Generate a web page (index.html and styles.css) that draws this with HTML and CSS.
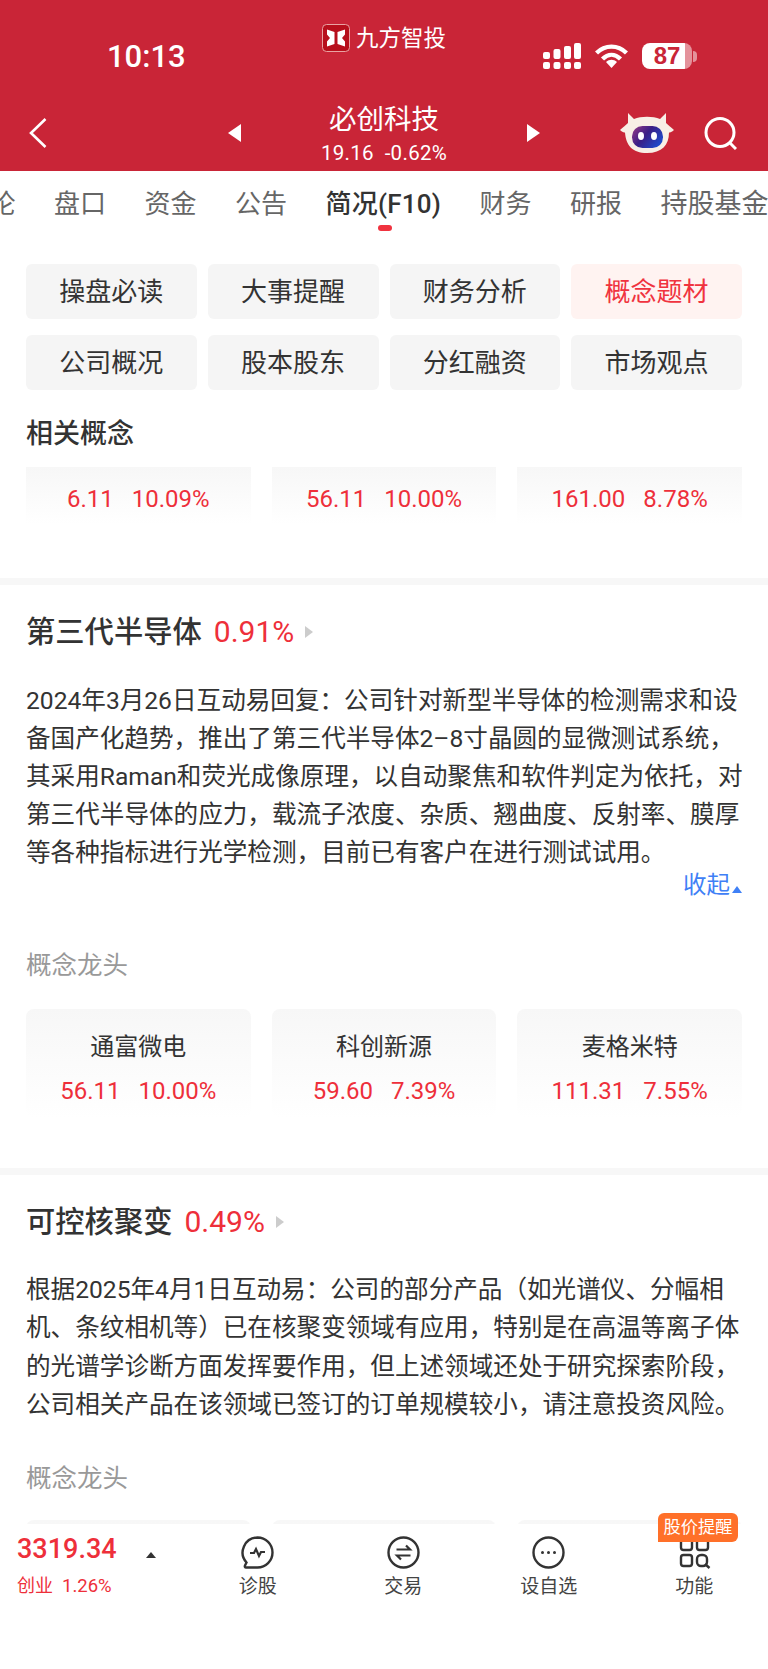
FILE: index.html
```html
<!DOCTYPE html>
<html lang="zh-CN">
  <head>
    <meta charset="UTF-8" />
    <meta name="viewport" content="width=device-width, initial-scale=1.0" />
    <title>必创科技 简况</title>
    <link rel="stylesheet" href="styles.css">
  </head>
  <body>
    <div class="page">
      <!-- Red header -->
      <header class="header">
        <div class="status">
          <div class="time">10:13</div>
          <div class="brand">
            <svg class="brand-logo" viewBox="0 0 28 28" width="28" height="28">
              <rect x="0.5" y="0.5" width="27" height="27" rx="4" fill="#b70f1c" stroke="#e9a3a3"/>
              <path d="M5 5.500 L12.500 8 V20 L5 22.500 V17.500 L8 14 L5 10.500 Z" fill="#fff"/>
              <path d="M23 5.500 L15.500 8 V20 L23 22.500 V17.500 L20 14 L23 10.500 Z" fill="#fff"/>
            </svg>
            <span class="brand-name">九方智投</span>
          </div>
          <div class="status-icons">
            <svg viewBox="0 0 38 26" width="38" height="26" fill="#fff">
              <rect x="0" y="19" width="7" height="7" rx="2"/>
              <rect x="10.500" y="19" width="7" height="7" rx="2"/>
              <rect x="21" y="19" width="7" height="7" rx="2"/>
              <rect x="31" y="19" width="7" height="7" rx="2"/>
              <rect x="0" y="9" width="7" height="7" rx="2"/>
              <rect x="10.500" y="6" width="7" height="10" rx="2"/>
              <rect x="21" y="3" width="7" height="13" rx="2"/>
              <rect x="31" y="0" width="7" height="16" rx="2"/>
            </svg>
            <svg viewBox="0 0 33 24" width="33" height="24" fill="none" stroke="#fff" stroke-width="4.400">
              <path d="M1.500 9 C10 0.500 23 0.500 31.500 9"/>
              <path d="M7.500 15 C13 9.500 20 9.500 25.500 15"/>
              <path d="M11 18 L16.500 24 L22 18 C18.500 15 14.500 15 11 18 Z" fill="#fff" stroke="none"/>
            </svg>
            <div class="battery">
              <div class="battery-body">87</div>
              <div class="battery-nub"></div>
            </div>
          </div>
        </div>
        <div class="nav">
          <svg class="nav-back" viewBox="0 0 18 30" width="18" height="30" fill="none" stroke="#fff" stroke-width="2.600">
            <path d="M16.500 1 L2 15 L16.500 29"/>
          </svg>
          <div class="pager">
            <span class="tri-left"></span>
            <div class="stock">
              <div class="stock-name">必创科技</div>
              <div class="stock-price">19.16&nbsp; -0.62%</div>
            </div>
            <span class="tri-right"></span>
          </div>
          <svg class="nav-bot" viewBox="0 0 54 40" width="54" height="40">
            <defs>
              <linearGradient id="botFace" x1="0" y1="0" x2="1" y2="0.600">
                <stop offset="0" stop-color="#9a3a86"/>
                <stop offset="0.500" stop-color="#3a1f86"/>
                <stop offset="1" stop-color="#1f48c8"/>
              </linearGradient>
            </defs>
            <path d="M8 0 L14 6 C21 3 33 3 40 6 L46 0 L46 10 C48 12 51 14 54 17 C52 19 50 19.500 49 19.500 C49 32 42 40 27 40 C12 40 6 32 5 19.500 C4 19.500 2 19 0 17 C3 14 6 12 8 10 Z" fill="#f8efe6"/>
            <rect x="12" y="13" width="31" height="22" rx="10.500" fill="url(#botFace)"/>
            <ellipse cx="21" cy="23" rx="3" ry="4" fill="#fff"/>
            <ellipse cx="34" cy="23" rx="3" ry="4" fill="#fff"/>
          </svg>
          <svg class="nav-search" viewBox="0 0 33 33" width="33" height="33" fill="none" stroke="#fff" stroke-width="3">
            <circle cx="16" cy="15.500" r="14"/>
            <path d="M26 26 L32 32"/>
          </svg>
        </div>
      </header>

      <!-- Tabs -->
      <nav class="tabs">
        <span class="tab">评论</span>
        <span class="tab">盘口</span>
        <span class="tab">资金</span>
        <span class="tab">公告</span>
        <span class="tab tab-active">简况(F10)</span>
        <span class="tab">财务</span>
        <span class="tab">研报</span>
        <span class="tab">持股基金</span>
      </nav>

      <!-- Sub menu and related concepts -->
      <section class="section section-top">
        <div class="menu">
          <div class="menu-btn">操盘必读</div>
          <div class="menu-btn">大事提醒</div>
          <div class="menu-btn">财务分析</div>
          <div class="menu-btn menu-btn-active">概念题材</div>
          <div class="menu-btn">公司概况</div>
          <div class="menu-btn">股本股东</div>
          <div class="menu-btn">分红融资</div>
          <div class="menu-btn">市场观点</div>
        </div>
        <h2 class="related-title">相关概念</h2>
        <div class="cards">
          <div class="card card-short">
            <div class="quote"><span>6.11</span><span>10.09%</span></div>
          </div>
          <div class="card card-short">
            <div class="quote"><span>56.11</span><span>10.00%</span></div>
          </div>
          <div class="card card-short">
            <div class="quote"><span>161.00</span><span>8.78%</span></div>
          </div>
        </div>
      </section>

      <section class="section concept">
        <div class="concept-head">
          <h2 class="concept-name">第三代半导体</h2>
          <span class="concept-pct">0.91%</span>
          <span class="concept-arrow"></span>
        </div>
        <p class="concept-text">2024年3月26日互动易回复：公司针对新型半导体的检测需求和设<br>备国产化趋势，推出了第三代半导体2–8寸晶圆的显微测试系统，<br>其采用Raman和荧光成像原理，以自动聚焦和软件判定为依托，对<br>第三代半导体的应力，载流子浓度、杂质、翘曲度、反射率、膜厚<br>等各种指标进行光学检测，目前已有客户在进行测试试用。</p>
        <div class="collapse"><span>收起</span><span class="collapse-tri"></span></div>
        <div class="leaders-title">概念龙头</div>
        <div class="cards">
          <div class="card">
            <div class="card-name">通富微电</div>
            <div class="quote"><span>56.11</span><span>10.00%</span></div>
          </div>
          <div class="card">
            <div class="card-name">科创新源</div>
            <div class="quote"><span>59.60</span><span>7.39%</span></div>
          </div>
          <div class="card">
            <div class="card-name">麦格米特</div>
            <div class="quote"><span>111.31</span><span>7.55%</span></div>
          </div>
        </div>
      </section>

      <section class="section concept concept-last">
        <div class="concept-head">
          <h2 class="concept-name">可控核聚变</h2>
          <span class="concept-pct">0.49%</span>
          <span class="concept-arrow"></span>
        </div>
        <p class="concept-text">根据2025年4月1日互动易：公司的部分产品（如光谱仪、分幅相<br>机、条纹相机等）已在核聚变领域有应用，特别是在高温等离子体<br>的光谱学诊断方面发挥要作用，但上述领域还处于研究探索阶段，<br>公司相关产品在该领域已签订的订单规模较小，请注意投资风险。</p>
        <div class="leaders-title leaders-title-tight">概念龙头</div>
        <div class="cards">
          <div class="card"></div>
          <div class="card"></div>
          <div class="card"></div>
        </div>
      </section>

      <!-- Bottom bar sits over the scrolled content -->
      <footer class="bar">
        <div class="index">
          <div class="index-top">
            <span class="index-value">3319.34</span>
            <span class="index-tri"></span>
          </div>
          <div class="index-sub"><span class="index-name">创业</span><span>1.26%</span></div>
        </div>
        <div class="tool">
          <svg viewBox="0 0 33 33" width="33" height="33" fill="none" stroke="#333" stroke-width="2.400">
            <path d="M16.500 1.500 A15 15 0 1 1 16.500 31.500 H5 C4 31.500 3.500 30.500 4 29.500 L5.500 26.500 A15 15 0 0 1 16.500 1.500 Z"/>
            <path d="M9 17 H13 L15 13 L18 20 L20 16 H24" stroke-width="2.200"/>
          </svg>
          <span class="tool-label">诊股</span>
        </div>
        <div class="tool">
          <svg viewBox="0 0 33 33" width="33" height="33" fill="none" stroke="#333" stroke-width="2.400">
            <circle cx="16.500" cy="16.500" r="15"/>
            <path d="M9.500 13.500 H23 L19 9.500" stroke-width="2.200"/>
            <path d="M23.500 19.500 H10 L14 23.500" stroke-width="2.200"/>
          </svg>
          <span class="tool-label">交易</span>
        </div>
        <div class="tool">
          <svg viewBox="0 0 33 33" width="33" height="33" fill="none" stroke="#333" stroke-width="2.400">
            <circle cx="16.500" cy="16.500" r="15"/>
            <circle cx="10.500" cy="16.500" r="1.500" fill="#333" stroke="none"/>
            <circle cx="16.500" cy="16.500" r="1.500" fill="#333" stroke="none"/>
            <circle cx="22.500" cy="16.500" r="1.500" fill="#333" stroke="none"/>
          </svg>
          <span class="tool-label">设自选</span>
        </div>
        <div class="tool">
          <svg viewBox="0 0 33 33" width="33" height="33" fill="none" stroke="#333" stroke-width="2.400">
            <rect x="3" y="3" width="11" height="11" rx="2.500"/>
            <rect x="19" y="3" width="11" height="11" rx="2.500"/>
            <rect x="3" y="19" width="11" height="11" rx="2.500"/>
            <rect x="19" y="19" width="10" height="11" rx="4"/>
            <path d="M27 28 L31.500 32"/>
          </svg>
          <span class="tool-label">功能</span>
        </div>
        <div class="badge">股价提醒</div>
      </footer>
    </div>
  </body>
</html>
```

FILE: styles.css
```css
* {
  box-sizing: border-box;
}

html,
body {
  margin: 0;
  padding: 0;
  height: 1669px;
  overflow: hidden;
  background-color: #fff;
}

body {
  font-family: Roboto, "Noto Sans CJK SC", sans-serif;
  color: #333;
}

.page {
  position: relative;
  width: 768px;
  height: 1669px;
  overflow: hidden;
}

/* Header */
.header {
  height: 171px;
  padding-bottom: 5px;
  background-color: #c92537;
  color: #fff;
}

.status {
  display: grid;
  grid-template-columns: 1fr auto 1fr;
  height: 100px;
}

.time {
  margin-top: 39px;
  padding-left: 107px;
  font-size: 31px;
  font-weight: 500;
  line-height: 36px;
}

.brand {
  display: flex;
  align-items: center;
  align-self: start;
  gap: 6px;
  margin-top: 24px;
}

.brand-logo {
  display: block;
}

.brand-name {
  font-size: 22.500px;
  line-height: 28px;
}

.status-icons {
  display: flex;
  align-items: center;
  align-self: start;
  justify-content: flex-end;
  gap: 14px;
  margin-top: 43px;
  padding-right: 71px;
}

.battery {
  display: flex;
  align-items: center;
}

.battery-body {
  width: 50px;
  height: 26px;
  border-radius: 8px;
  background: linear-gradient(to right, #fff 86%, rgba(255, 255, 255, 0.5) 86%);
  color: #c92537;
  font-family: "Liberation Sans", sans-serif;
  font-size: 24px;
  font-weight: 700;
  line-height: 26px;
  text-align: center;
}

.battery-nub {
  width: 4px;
  height: 11px;
  margin-left: 1px;
  border-radius: 0 4px 4px 0;
  background-color: rgba(255, 255, 255, 0.5);
}

.nav {
  display: flex;
  align-items: center;
  height: 66px;
  padding-left: 29px;
}

.nav-back {
  display: block;
}

.pager {
  display: flex;
  align-items: center;
  justify-content: space-between;
  width: 312px;
  margin-left: 181px;
}

.tri-left,
.tri-right {
  width: 0;
  height: 0;
  border-top: 9px solid transparent;
  border-bottom: 9px solid transparent;
}

.tri-left {
  border-right: 13px solid #fff;
}

.tri-right {
  border-left: 13px solid #fff;
}

.stock {
  text-align: center;
}

.stock-name {
  margin-top: 2px;
  margin-bottom: 2px;
  font-size: 27.500px;
  line-height: 36px;
}

.stock-price {
  font-size: 20.500px;
  line-height: 26px;
  letter-spacing: 0.300px;
}

.nav-bot {
  display: block;
  margin-left: 80px;
}

.nav-search {
  display: block;
  margin-left: 30px;
}

/* Tabs */
.tabs {
  display: flex;
  gap: 38.500px;
  height: 69px;
  margin-left: -36.500px;
  padding-top: 15px;
  white-space: nowrap;
}

.tab {
  position: relative;
  color: #666;
  font-size: 26px;
  line-height: 36px;
}

.tab:last-child {
  font-size: 27px;
}

.tab-active {
  color: #333;
  font-weight: 500;
  letter-spacing: 0.200px;
}

.tab-active::after {
  content: "";
  position: absolute;
  left: 52px;
  top: 39px;
  width: 14px;
  height: 6px;
  border-radius: 3px;
  background-color: #f0333f;
}

/* Sections */
.section {
  padding: 0 26px;
  border-bottom: 7px solid #f7f7f7;
}

.section-top {
  height: 345px;
  padding-top: 24px;
}

.menu {
  display: grid;
  grid-template-columns: repeat(4, 1fr);
  gap: 16px 11px;
}

.menu-btn {
  height: 55px;
  border-radius: 6px;
  background-color: #f5f5f5;
  font-size: 26px;
  line-height: 57px;
  text-align: center;
}

.menu-btn-active {
  background-color: #fff3f1;
  color: #f0333f;
}

.related-title {
  margin: 24px 0 13px;
  font-size: 27px;
  font-weight: 500;
  line-height: 40px;
}

.cards {
  display: grid;
  grid-template-columns: repeat(3, 1fr);
  gap: 21px;
}

.card {
  height: 109px;
  padding-top: 20px;
  border-radius: 8px;
  background: linear-gradient(to bottom, #f7f7f7, #fff);
  text-align: center;
}

.card-short {
  height: 57px;
  padding-top: 14px;
  border-radius: 0;
}

.card-name {
  margin-bottom: 8px;
  font-size: 24px;
  line-height: 36px;
}

.quote {
  display: flex;
  justify-content: center;
  gap: 18px;
  color: #ee2f3a;
  font-size: 24px;
  line-height: 36px;
}

/* Concept blocks */
.concept {
  height: 590px;
  padding-top: 27px;
}

.concept-last {
  height: auto;
  border-bottom: none;
}

.concept-head {
  display: flex;
  align-items: center;
  height: 40px;
}

.concept-name {
  margin: 0;
  font-size: 29.300px;
  font-weight: 500;
  line-height: 40px;
}

.concept-pct {
  margin-left: 12px;
  color: #ee2f3a;
  font-size: 30px;
  line-height: 40px;
}

.concept-arrow {
  width: 0;
  height: 0;
  margin-left: 11px;
  border-top: 6px solid transparent;
  border-bottom: 6px solid transparent;
  border-left: 8px solid #ccc;
}

.concept-text {
  margin: 30px 0 0;
  font-size: 24.600px;
  line-height: 38px;
  white-space: nowrap;
}

.concept-last .concept-text {
  margin-top: 29px;
  line-height: 38.400px;
}

.collapse {
  display: flex;
  align-items: center;
  justify-content: flex-end;
  height: 30px;
  margin-top: -2px;
  color: #3f80f6;
  font-size: 23.500px;
  line-height: 30px;
}

.collapse-tri {
  width: 0;
  height: 0;
  margin-top: 9px;
  margin-left: 2px;
  border-right: 5.500px solid transparent;
  border-bottom: 7px solid #3f80f6;
  border-left: 5.500px solid transparent;
}

.leaders-title {
  margin: 47px 0 26px;
  color: #999;
  font-size: 25.500px;
  line-height: 36px;
}

.leaders-title-tight {
  margin: 35px 0 24px;
}

/* Bottom bar */
.bar {
  position: absolute;
  left: 0;
  right: 0;
  bottom: 0;
  display: flex;
  height: 145px;
  padding-right: 1px;
  background-color: #fff;
}

.index {
  width: 185px;
  padding: 9px 0 0 17px;
}

.index-top {
  display: flex;
  align-items: center;
  height: 32px;
}

.index-value {
  color: #ee2f3a;
  font-size: 27px;
  font-weight: 500;
  line-height: 32px;
}

.index-tri {
  width: 0;
  height: 0;
  margin-top: 12px;
  margin-left: 29px;
  border-right: 5.500px solid transparent;
  border-bottom: 6px solid #333;
  border-left: 5.500px solid transparent;
}

.index-sub {
  display: flex;
  gap: 9px;
  margin-top: 5px;
  color: #ee2f3a;
  font-size: 18.500px;
  line-height: 32px;
}

.index-name {
  font-size: 18px;
}

.tool {
  display: flex;
  flex-direction: column;
  align-items: center;
  width: 145.500px;
  padding-top: 12px;
}

.tool svg {
  display: block;
}

.tool-label {
  margin-top: 4px;
  color: #444;
  font-size: 19px;
  line-height: 28px;
}

.badge {
  position: absolute;
  top: -11px;
  right: 30px;
  width: 80px;
  height: 29px;
  border-radius: 6px 6px 6px 0;
  background-color: #ff7029;
  color: #fff;
  font-size: 17.300px;
  line-height: 29px;
  text-align: center;
}
```
